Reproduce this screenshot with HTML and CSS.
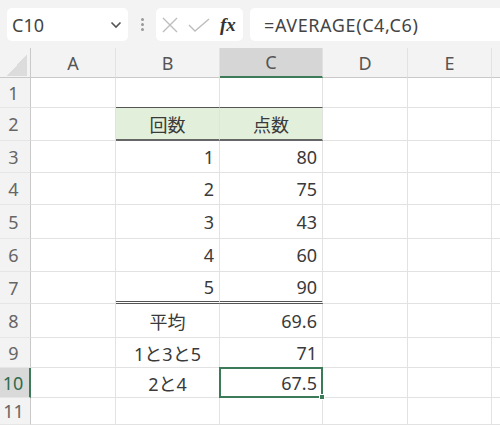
FILE: index.html
```html
<!DOCTYPE html>
<html lang="ja">
<head>
    <meta charset="UTF-8">
    <title>AVERAGE</title>
    <link rel="stylesheet" href="styles.css">
</head>
<body>
    <!-- Formula bar -->
    <div class="toolbar">
        <div class="name-box">
            <span>C10</span>
            <svg class="chevron" width="12" height="8" viewBox="0 0 12 8"><path d="M1.5 1.5 L6 6 L10.5 1.5" fill="none" stroke="#555" stroke-width="1.6"/></svg>
        </div>
        <div class="grip"><i></i><i></i><i></i></div>
        <div class="fx-box">
            <svg width="18" height="16" viewBox="0 0 18 16"><path d="M2 1 L16 15 M16 1 L2 15" stroke="#bdbdbd" stroke-width="1.4" fill="none"/></svg>
            <svg width="22" height="16" viewBox="0 0 22 16"><path d="M1 8 L7 14 L21 2" stroke="#bdbdbd" stroke-width="1.4" fill="none"/></svg>
            <span class="fx">fx</span>
        </div>
        <div class="formula">=AVERAGE(C4,C6)</div>
    </div>

    <!-- Sheet -->
    <div class="sheet">
        <div class="corner"><span></span></div>
        <div class="col-head">A</div>
        <div class="col-head">B</div>
        <div class="col-head active">C</div>
        <div class="col-head">D</div>
        <div class="col-head">E</div>
        <div class="col-head"></div>

        <div class="row-head">1</div>
        <div class="cell"></div><div class="cell"></div><div class="cell"></div><div class="cell"></div><div class="cell"></div><div class="cell"></div>

        <div class="row-head">2</div>
        <div class="cell"></div>
        <div class="cell th">回数</div>
        <div class="cell th">点数</div>
        <div class="cell"></div><div class="cell"></div><div class="cell"></div>

        <div class="row-head">3</div>
        <div class="cell"></div><div class="cell num">1</div><div class="cell num">80</div>
        <div class="cell"></div><div class="cell"></div><div class="cell"></div>

        <div class="row-head">4</div>
        <div class="cell"></div><div class="cell num">2</div><div class="cell num">75</div>
        <div class="cell"></div><div class="cell"></div><div class="cell"></div>

        <div class="row-head">5</div>
        <div class="cell"></div><div class="cell num">3</div><div class="cell num">43</div>
        <div class="cell"></div><div class="cell"></div><div class="cell"></div>

        <div class="row-head">6</div>
        <div class="cell"></div><div class="cell num">4</div><div class="cell num">60</div>
        <div class="cell"></div><div class="cell"></div><div class="cell"></div>

        <div class="row-head">7</div>
        <div class="cell"></div><div class="cell num double">5</div><div class="cell num double">90</div>
        <div class="cell"></div><div class="cell"></div><div class="cell"></div>

        <div class="row-head">8</div>
        <div class="cell"></div><div class="cell mid">平均</div><div class="cell num">69.6</div>
        <div class="cell"></div><div class="cell"></div><div class="cell"></div>

        <div class="row-head">9</div>
        <div class="cell"></div><div class="cell mid">1と3と5</div><div class="cell num">71</div>
        <div class="cell"></div><div class="cell"></div><div class="cell"></div>

        <div class="row-head active">10</div>
        <div class="cell"></div><div class="cell mid">2と4</div><div class="cell num selected">67.5<span class="handle"></span></div>
        <div class="cell"></div><div class="cell"></div><div class="cell"></div>

        <div class="row-head">11</div>
        <div class="cell"></div><div class="cell"></div><div class="cell"></div><div class="cell"></div><div class="cell"></div><div class="cell"></div>
    </div>
</body>
</html>
```

FILE: styles.css
```css
* {
    margin: 0;
    padding: 0;
    box-sizing: border-box;
}

body {
    width: 500px;
    height: 425px;
    overflow: hidden;
    background-color: #fff;
    font-family: "Noto Sans", "Noto Sans CJK JP", sans-serif;
    color: #3a3a3a;
}

/* Formula bar */
.toolbar {
    height: 48px;
    background-color: #f3f3f3;
    display: flex;
    align-items: flex-start;
    padding-top: 8px;
    padding-left: 7px;
}

.name-box {
    width: 121px;
    height: 33px;
    background-color: #fff;
    border-radius: 5px;
    display: flex;
    align-items: center;
    justify-content: space-between;
    padding: 0 4px 0 5px;
    font-size: 18px;
    color: #444;
}

.chevron {
    margin-right: 2px;
}

.grip {
    width: 28px;
    height: 33px;
    display: flex;
    flex-direction: column;
    align-items: center;
    justify-content: center;
    gap: 2px;
}

.grip i {
    width: 3px;
    height: 3px;
    border-radius: 50%;
    background-color: #999;
}

.fx-box {
    width: 87px;
    height: 33px;
    background-color: #fff;
    border-radius: 5px;
    display: flex;
    align-items: center;
    padding-left: 5px;
    gap: 9px;
}

.fx {
    font-family: "Liberation Serif", serif;
    font-style: italic;
    font-weight: bold;
    font-size: 19px;
    color: #333;
    margin-left: 1px;
}

.formula {
    flex: 1;
    height: 33px;
    margin-left: 7px;
    background-color: #fff;
    border-radius: 5px 0 0 5px;
    display: flex;
    align-items: center;
    padding-left: 14px;
    font-size: 18px;
    letter-spacing: 0.6px;
    color: #444;
}

/* Sheet grid */
.sheet {
    display: grid;
    grid-template-columns: 31px 85px 104px 103px 85px 84px 1fr;
    grid-template-rows: 30px 30px 33px 32px 32px 34px 33px 32px 34px 30px 30px 27px;
    font-size: 18px;
}

.corner {
    background-color: #f3f3f3;
    border-right: 1px solid #c9c9c9;
    border-bottom: 1px solid #c9c9c9;
    padding: 6px 2px 1px 7px;
}

.corner span {
    display: block;
    width: 20px;
    height: 22px;
    background: linear-gradient(to bottom right, transparent 50%, #dcdcdc 50%);
}

.col-head {
    background-color: #f3f3f3;
    border-right: 1px solid #e2e2e2;
    border-bottom: 1px solid #c9c9c9;
    display: flex;
    align-items: center;
    justify-content: center;
    color: #555;
}

.col-head.active {
    background-color: #d6d6d6;
    border-bottom: 2px solid #3c7a58;
}

.row-head {
    background-color: #f3f3f3;
    border-right: 1px solid #c9c9c9;
    border-bottom: 1px solid #e6e6e6;
    display: flex;
    align-items: center;
    justify-content: center;
    padding-right: 3px;
    color: #666;
}

.row-head.active {
    background-color: #d9d9d9;
    border-right: 2px solid #3c7a58;
    color: #2f6b4c;
}

.cell {
    border-right: 1px solid #e2e2e2;
    border-bottom: 1px solid #e2e2e2;
    display: flex;
    align-items: center;
    padding: 0 5px;
}

.num {
    justify-content: flex-end;
}

.mid {
    justify-content: center;
}

.th {
    justify-content: center;
    background-color: #e2efda;
    border-top: 1px solid #555;
    border-bottom: 2px solid #666;
    margin-top: -1px;
}

.double {
    border-bottom: 3px double #555;
}

.selected {
    position: relative;
    border: 2px solid #3c7a58;
    margin: -1px 0 0 -1px;
    padding-right: 4px;
}

.handle {
    position: absolute;
    right: -4px;
    bottom: -4px;
    width: 6px;
    height: 6px;
    background-color: #3c7a58;
    border: 1px solid #fff;
}
```
